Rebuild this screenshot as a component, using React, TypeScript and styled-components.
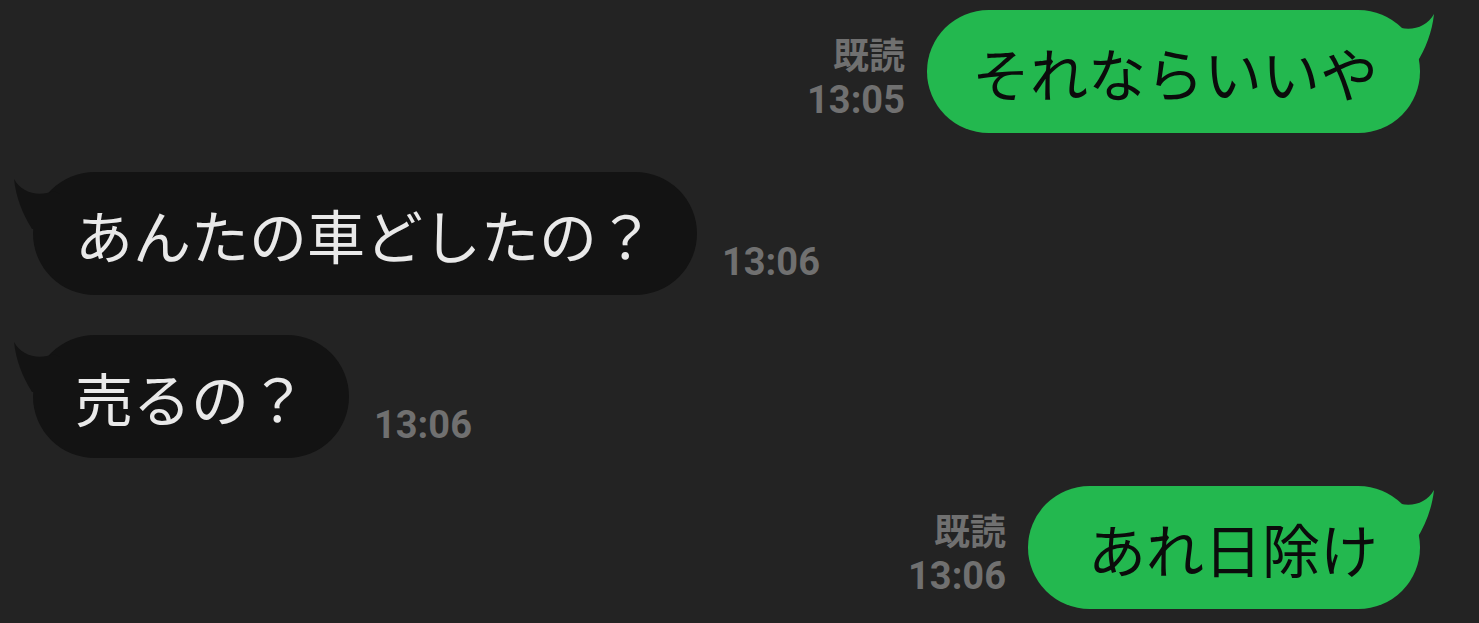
import styled, { createGlobalStyle } from 'styled-components';

type Side = 'me' | 'them';

type Message = {
  id: number;
  side: Side;
  text: string;
  time: string;
  read?: boolean;
  gap: number;
  padLeft?: number;
};

const MESSAGES: Message[] = [
  { id: 1, side: 'me', text: 'それならいいや', time: '13:05', read: true, gap: 10, padLeft: 45 },
  { id: 2, side: 'them', text: 'あんたの車どしたの？', time: '13:06', gap: 39 },
  { id: 3, side: 'them', text: '売るの？', time: '13:06', gap: 40 },
  { id: 4, side: 'me', text: 'あれ日除け', time: '13:06', read: true, gap: 28, padLeft: 60 },
];

const GlobalStyle = createGlobalStyle`
  html, body {
    margin: 0;
    padding: 0;
    background: #232323;
  }
  body {
    font-family: "Noto Sans CJK JP", "Noto Sans", sans-serif;
  }
`;

const Tail = ({ side }: { side: Side }) => (
  <TailSvg $side={side} width="50" height="60" viewBox="0 0 50 60">
    <path d="M8 16 C24 22, 40 18, 48 4 C46 22, 40 38, 30 54 L0 54 L0 20 Z" />
  </TailSvg>
);

const App = () => {
  return (
    <>
      <GlobalStyle />
      <Chat>
        {MESSAGES.map((m) => (
          <Row key={m.id} $side={m.side} $gap={m.gap}>
            {m.side === 'me' && (
              <Meta $side={m.side}>
                {m.read && <ReadLabel>既読</ReadLabel>}
                <Time>{m.time}</Time>
              </Meta>
            )}
            <Bubble $side={m.side} $padLeft={m.padLeft}>
              <Tail side={m.side} />
              <BubbleText>{m.text}</BubbleText>
            </Bubble>
            {m.side === 'them' && (
              <Meta $side={m.side}>
                <Time>{m.time}</Time>
              </Meta>
            )}
          </Row>
        ))}
      </Chat>
    </>
  );
};

export default App;

const Chat = styled.div`
  display: flex;
  flex-direction: column;
  width: 1479px;
  height: 623px;
  padding: 0 59px 0 33px;
  box-sizing: border-box;
  overflow: hidden;
`;

const Row = styled.div<{ $side: Side; $gap: number }>`
  display: flex;
  align-items: flex-end;
  justify-content: ${(p) => (p.$side === 'me' ? 'flex-end' : 'flex-start')};
  margin-top: ${(p) => p.$gap}px;
`;

const Bubble = styled.div<{ $side: Side; $padLeft?: number }>`
  position: relative;
  display: flex;
  align-items: center;
  height: 123px;
  padding: 0 42px 0 ${(p) => p.$padLeft ?? 42}px;
  border-radius: 62px;
  background: ${(p) => (p.$side === 'me' ? '#23b84f' : '#131313')};
  color: ${(p) => (p.$side === 'me' ? '#0b0b0b' : '#e9e9e9')};
  fill: ${(p) => (p.$side === 'me' ? '#23b84f' : '#131313')};
`;

const TailSvg = styled.svg<{ $side: Side }>`
  position: absolute;
  top: 0;
  ${(p) =>
    p.$side === 'me'
      ? 'right: -16px;'
      : 'left: -21px; top: 3px; transform: scaleX(-1);'}
`;

const BubbleText = styled.span`
  position: relative;
  font-family: "Noto Sans CJK JP", sans-serif;
  font-size: 58px;
  line-height: 1;
  white-space: nowrap;
`;

const Meta = styled.div<{ $side: Side }>`
  display: flex;
  flex-direction: column;
  align-items: ${(p) => (p.$side === 'me' ? 'flex-end' : 'flex-start')};
  margin: ${(p) => (p.$side === 'me' ? '0 22px 9px 0' : '0 0 9px 25px')};
  color: #707070;
  font-weight: 700;
  font-size: 38px;
  line-height: 47px;
`;

const ReadLabel = styled.span`
  font-family: "Noto Sans CJK JP", sans-serif;
  font-size: 36px;
`;

const Time = styled.span`
  font-family: Roboto, "Liberation Sans", sans-serif;
`;
